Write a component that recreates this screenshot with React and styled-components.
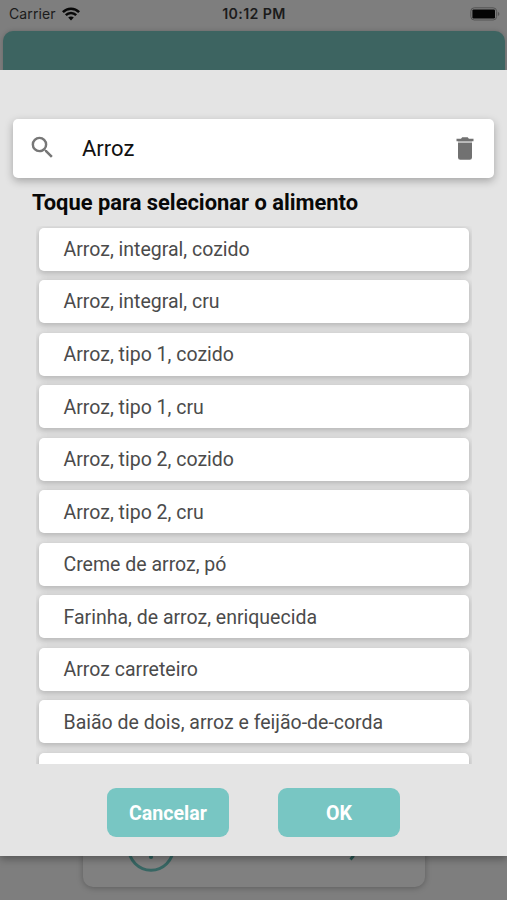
import React from "react";
import styled, { createGlobalStyle } from "styled-components";

const GlobalStyle = createGlobalStyle`
  * { box-sizing: border-box; }
  body { margin: 0; font-family: Roboto, sans-serif; }
`;

const Screen = styled.div`
  position: relative;
  display: flex;
  flex-direction: column;
  height: 900px;
  overflow: hidden;
  background: #7e7e7e;
`;

const StatusBar = styled.header`
  display: grid;
  grid-template-columns: 1fr auto 1fr;
  align-items: center;
  height: 31px;
  padding: 0 7px 4px 9px;
  font: 500 14px Inter, sans-serif;
  color: #1b1b1b;
`;

const Carrier = styled.div`
  display: flex;
  align-items: center;
  gap: 6px;
  font-weight: 400;
  font-size: 14px;
  letter-spacing: 0.1px;
`;

const Clock = styled.div`
  font-weight: 600;
  font-size: 14.2px;
  letter-spacing: 0.4px;
  margin-right: 1px;
`;

const BatteryIcon = styled.svg`
  justify-self: end;
`;

const Banner = styled.div`
  height: 60px;
  margin: 0 2px 0 3px;
  border-radius: 10px 10px 0 0;
  background: #3d6461;
  box-shadow: 0 0 5px rgba(0, 0, 0, 0.18);
`;

const PageCard = styled.section`
  display: flex;
  align-items: flex-end;
  justify-content: space-between;
  width: 342px;
  height: 107px;
  margin: auto 0 13px 83px;
  padding: 0 69px 15px 44px;
  border-radius: 10px;
  background: #808080;
  box-shadow: 0 1px 6px rgba(0, 0, 0, 0.27);
`;

const CardMark = styled.svg`
  margin-bottom: ${(p) => p.$lift || 0}px;
`;

const Dialog = styled.main`
  position: absolute;
  inset: 70px 0 44.5px;
  display: flex;
  flex-direction: column;
  padding-top: 49px;
  background: #e4e4e4;
  box-shadow: 0 3px 8px rgba(0, 0, 0, 0.32);
  clip-path: inset(0 0 -20px);
`;

const SearchBar = styled.div`
  display: flex;
  align-items: center;
  flex: none;
  height: 58.5px;
  margin: 0 13px;
  padding: 0 16px 0 15px;
  border-radius: 5px;
  background: #fff;
  box-shadow: 0 3px 8px rgba(0, 0, 0, 0.28);
`;

const SearchIcon = styled.svg`
  margin-bottom: 1px;
`;

const Query = styled.span`
  flex: 1;
  margin-left: 25px;
  font-size: 22px;
  color: #111;
`;

const Heading = styled.h1`
  flex: none;
  height: 48.5px;
  margin: 0 0 0 32px;
  padding-top: 12.9px;
  font-size: 21.9px;
  line-height: 26px;
  font-weight: 700;
  white-space: nowrap;
  color: #080808;
`;

const FoodList = styled.ul`
  flex: none;
  display: flex;
  flex-direction: column;
  gap: 9.55px;
  height: 538px;
  margin: 0 35px 0 36px;
  padding: 1.5px 2px 0 3px;
  list-style: none;
  overflow: hidden;
`;

const FoodItem = styled.li`
  flex: none;
  display: flex;
  align-items: center;
  width: 430px;
  height: 43px;
  padding: 0.8px 0 0 24.5px;
  border-radius: 5px;
  background: #fff;
  box-shadow: 0 2px 6px 1px rgba(0, 0, 0, 0.2);
  font-size: 19.5px;
  color: #4b4b4b;
`;

const Actions = styled.footer`
  display: flex;
  justify-content: center;
  gap: 49px;
  margin-top: 24.3px;
`;

const ActionButton = styled.button`
  width: 122px;
  height: 49px;
  padding: 1px 0 0;
  border: 0;
  border-radius: 9px;
  background: #78c6c3;
  color: #fff;
  font: 700 19.6px Roboto, sans-serif;
`;

const foods = [
  "Arroz, integral, cozido",
  "Arroz, integral, cru",
  "Arroz, tipo 1, cozido",
  "Arroz, tipo 1, cru",
  "Arroz, tipo 2, cozido",
  "Arroz, tipo 2, cru",
  "Creme de arroz, pó",
  "Farinha, de arroz, enriquecida",
  "Arroz carreteiro",
  "Baião de dois, arroz e feijão-de-corda",
  "",
];

export default function App() {
  return (
    <>
      <GlobalStyle />
      <Screen>
        <StatusBar>
          <Carrier>
            Carrier
            <svg width="18" height="14" viewBox="0 0 18 14" fill="none" stroke="#080808" strokeWidth="2.5">
              <path d="M.9 5.1C5.3.5 12.7.5 17.1 5.1" />
              <path d="M3.8 8.1c2.9-2.9 7.5-2.9 10.4 0" />
              <path d="M6.2 10.6c1.6-1.4 4-1.4 5.6 0L9 13.5Z" fill="#080808" stroke="none" />
            </svg>
          </Carrier>
          <Clock>10:12 PM</Clock>
          <BatteryIcon width="30" height="14" viewBox="0 0 30 14">
            <rect x=".8" y=".8" width="25.8" height="12.2" rx="3.5" fill="none" stroke="#545454" />
            <rect x="2.4" y="2.4" width="22.6" height="9" rx="1.2" fill="#050505" />
            <path d="M27.9 4.7c2 .8 2 3.5 0 4.4Z" fill="#545454" />
          </BatteryIcon>
        </StatusBar>
        <Banner />
        <PageCard>
          <CardMark width="48" height="48" viewBox="0 0 48 48">
            <circle cx="24" cy="24" r="22.2" fill="none" stroke="#376663" strokeWidth="3" />
            <path d="M24 12v14" stroke="#376663" strokeWidth="3" />
            <circle cx="24" cy="33" r="2.1" fill="#2d5f5c" />
          </CardMark>
          <CardMark $lift={10} width="9" height="16" viewBox="0 0 9 16">
            <path d="m1 2 5 8.5-2.500 3" fill="none" stroke="#28534f" strokeWidth="2.8" />
          </CardMark>
        </PageCard>

        <Dialog>
          <SearchBar>
            <SearchIcon width="29" height="29" viewBox="0 0 24 24" fill="#777">
              <path d="M15.5 14h-.79l-.28-.27A6.47 6.47 0 0 0 16 9.5 6.5 6.5 0 1 0 9.5 16c1.61 0 3.09-.59 4.23-1.57l.27.28v.79l5 4.99L20.49 19l-4.99-5Zm-6 0a4.5 4.5 0 1 1 0-9 4.5 4.5 0 0 1 0 9Z" />
            </SearchIcon>
            <Query>Arroz</Query>
            <svg width="27" height="29" viewBox="0 0 27 29" fill="#717171">
              <path d="M7 9h14v14.4q0 2.3-2.3 2.3H9.3Q7 25.7 7 23.4Z" />
              <path d="M7 7.3h14V9H7Z" fill="#bcbcbc" />
              <path d="M5.5 4.7H10l1.2-1.4h5.5l1.2 1.4h4.6v2.6h-17Z" />
            </svg>
          </SearchBar>
          <Heading>Toque para selecionar o alimento</Heading>
          <FoodList>
            {foods.map((food, index) => (
              <FoodItem key={index}>{food}</FoodItem>
            ))}
          </FoodList>
          <Actions>
            <ActionButton>Cancelar</ActionButton>
            <ActionButton>OK</ActionButton>
          </Actions>
        </Dialog>
      </Screen>
    </>
  );
}
